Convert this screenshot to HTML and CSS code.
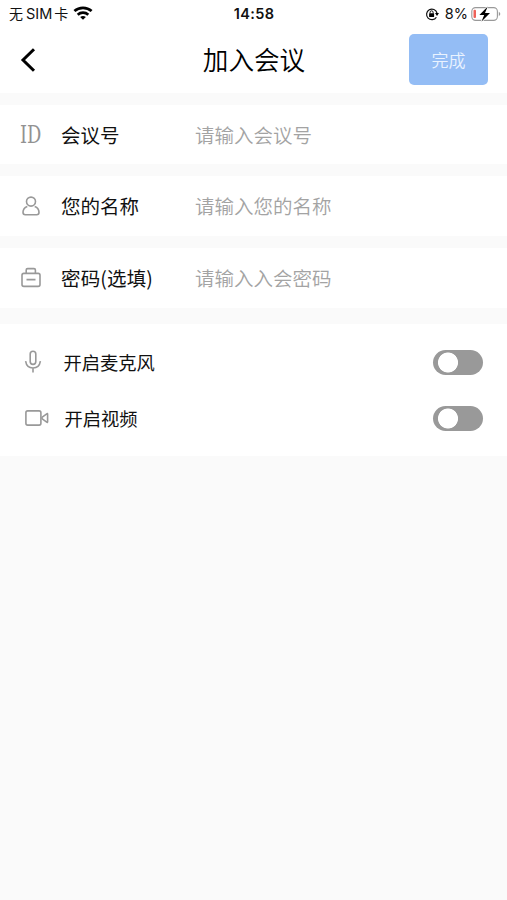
FILE: index.html
```html
<!DOCTYPE html>
<html lang="zh-CN">
<head>
<meta charset="utf-8">
<title>加入会议</title>
<link rel="stylesheet" href="styles.css">
</head>
<body>
<header class="top">
  <div class="status">
    <div class="status-left"><span class="carrier">无<span class="sim">SIM</span>卡</span>
      <svg class="wifi" width="20" height="14" viewBox="0 0 20 14"><g fill="none" stroke="#000" stroke-width="2.7"><path d="M1.4 5.1C6.2.8 13.8.8 18.6 5.1"/><path d="M4.7 8.7C7.7 6 12.3 6 15.3 8.7"/></g><path d="M7.1 11Q10 8.8 12.9 11L10 13.8Z"/></svg>
    </div>
    <time class="clock">14:58</time>
    <div class="status-right">
      <svg width="14" height="14" viewBox="0 0 14 14"><path d="M11.4 10.2A5.3 5.3 0 1 1 12 6" fill="none" stroke="#111" stroke-width="1.2"/><path d="M10 6h4l-2 3z"/><rect x="4.1" y="6.2" width="5" height="3.7" rx=".5"/><path d="M5.1 6.5V5.3a1.5 1.5 0 0 1 3 0v1.2" fill="none" stroke="#111"/></svg>
      <span class="percent">8%</span>
      <svg class="battery" width="30" height="16" viewBox="0 0 30 16"><rect x=".8" y="1.6" width="25.6" height="12.8" rx="3.8" fill="#fff" stroke="#999" stroke-width="1.1"/><path d="M27.8 5.8q3 2.2 0 4.4z" fill="#999"/><rect x="2.5" y="3.7" width="2.5" height="8.4" rx="1" fill="#ee6259"/><path d="M16.7.5L8.4 9h4.8l-2.7 6.6L19 7h-5z" stroke="#fff" stroke-width="1.4" paint-order="stroke"/></svg>
    </div>
  </div>
  <nav class="nav">
    <svg width="16" height="26" viewBox="0 0 16 26"><path d="M14 2.2L3 13l11 10.8" fill="none" stroke="#000" stroke-width="3"/></svg>
    <h1>加入会议</h1>
    <button class="done">完成</button>
  </nav>
</header>
<main>
  <label class="field">
    <span class="id-mark">ID</span>
    <span class="name">会议号</span><input placeholder="请输入会议号">
  </label>
  <label class="field">
    <svg class="icon" width="24" height="24" viewBox="0 0 24 24"><circle cx="12" cy="7.6" r="4.5"/><path d="M8.3 12.4C5.2 13.5 4 16 4 18.3Q4 20.7 6.3 20.7H17.7Q20 20.7 20 18.3C20 16 18.8 13.5 15.7 12.4"/></svg>
    <span class="name">您的名称</span><input placeholder="请输入您的名称">
  </label>
  <label class="field">
    <svg class="icon" width="24" height="24" viewBox="0 0 24 24"><rect x="3" y="7.4" width="18" height="13" rx="1.8"/><path d="M7.2 7.4V4Q7.2 2.6 8.6 2.6H15Q16.4 2.6 16.4 4V7.4M7.5 13.6H16.5"/></svg>
    <span class="name password">密码(选填)</span><input placeholder="请输入入会密码">
  </label>
  <section class="options">
    <label class="option mic">
      <svg class="icon" width="26" height="26" viewBox="0 0 26 26"><rect x="10.2" y="2.2" width="5.6" height="13.2" rx="2.8"/><path d="M5.6 12.1C6.3 16.4 9.3 19 13 19S19.7 16.4 20.4 12.1M13 19V23.4"/></svg>
      <span>开启麦克风</span><input type="checkbox" class="switch">
    </label>
    <label class="option video">
      <svg class="icon" width="26" height="26" viewBox="0 0 26 26"><rect x="2.9" y="5.9" width="15" height="14.2" rx="1.8"/><path d="M24.6 9.2V16.8Q24.6 17.8 23.7 17.2L19.3 14Q18.3 13 19.3 12L23.7 8.8Q24.6 8.2 24.6 9.2Z"/></svg>
      <span>开启视频</span><input type="checkbox" class="switch">
    </label>
  </section>
</main>
</body>
</html>
```
FILE: styles.css
```css
* { box-sizing: border-box; }
body {
  margin: 0;
  min-height: 900px;
  background: #fafafa;
  color: #111;
  font-family: "Noto Sans CJK SC", sans-serif;
}
svg { flex: none; display: block; }
.top { height: 93px; background: #fff; }
.status {
  height: 27px;
  padding: 0 6px 0 9px;
  display: grid;
  grid-template-columns: 1fr auto 1fr;
  align-items: center;
  font-size: 14px;
  line-height: 27px;
}
.status-left, .status-right { display: flex; align-items: center; }
.status-right { justify-content: flex-end; }
.carrier { width: 59px; white-space: nowrap; }
.sim { font: 14.5px Inter, sans-serif; margin: 0 2px 0 3px; }
.wifi { margin: -2px 0 0 5px; }
.clock { font: 600 14.5px/27px Inter, sans-serif; letter-spacing: .35px; margin-left: -2px; }
.percent { font: 14.5px/27px Inter, sans-serif; margin: 0 3px 0 6px; }
.nav {
  height: 65px;
  padding: 0 19px 0 20px;
  display: grid;
  grid-template-columns: 79px 1fr 79px;
  align-items: center;
}
h1 { margin: 0 0 1px; font-size: 25.6px; font-weight: 350; line-height: 40px; text-align: center; color: #000; }
.done {
  height: 51px;
  border: 0;
  border-radius: 5px;
  background: #94bdf5;
  color: #eaf3ff;
  font: 350 17px "Noto Sans CJK SC", sans-serif;
}
.field {
  height: 60px;
  margin-top: 12px;
  padding-left: 19px;
  display: flex;
  align-items: center;
  background: #fff;
  font-size: 19.5px;
}
.field:first-child { height: 59px; }
.field:first-child input { padding: 0; }
.icon { fill: none; stroke: #999; stroke-width: 1.6; }
.id-mark {
  flex: none;
  width: 24px;
  padding-left: 1px;
  color: #929292;
  font: 23.5px/30px "DejaVu Serif", serif;
  transform: scaleX(.76);
  transform-origin: 1px 50%;
}
.name { width: 134px; margin-left: 18px; line-height: 30px; white-space: nowrap; }
.password { letter-spacing: .15px; margin-top: -1px; }
.field input {
  flex: 1;
  min-width: 0;
  height: 36px;
  padding: 0 0 2px;
  border: 0;
  outline: 0;
  background: none;
  font: 19.5px "Noto Sans CJK SC", sans-serif;
}
.field input::placeholder { color: #a3a3a3; opacity: 1; font-weight: 350; }
.options { height: 132px; margin-top: 16px; padding: 10px 24px 0 20px; background: #fff; }
.option { height: 56px; display: flex; align-items: center; font-size: 18.3px; }
.option span { margin-left: 17.5px; line-height: 28px; }
.video .icon { margin-left: 3px; }
.video span { margin-left: 15.5px; }
.switch {
  appearance: none;
  width: 50px;
  height: 25px;
  margin: 0 0 0 auto;
  border-radius: 13px;
  background: radial-gradient(circle at 15px 12.5px, #fff 9.6px, #999 10.4px);
}
```
